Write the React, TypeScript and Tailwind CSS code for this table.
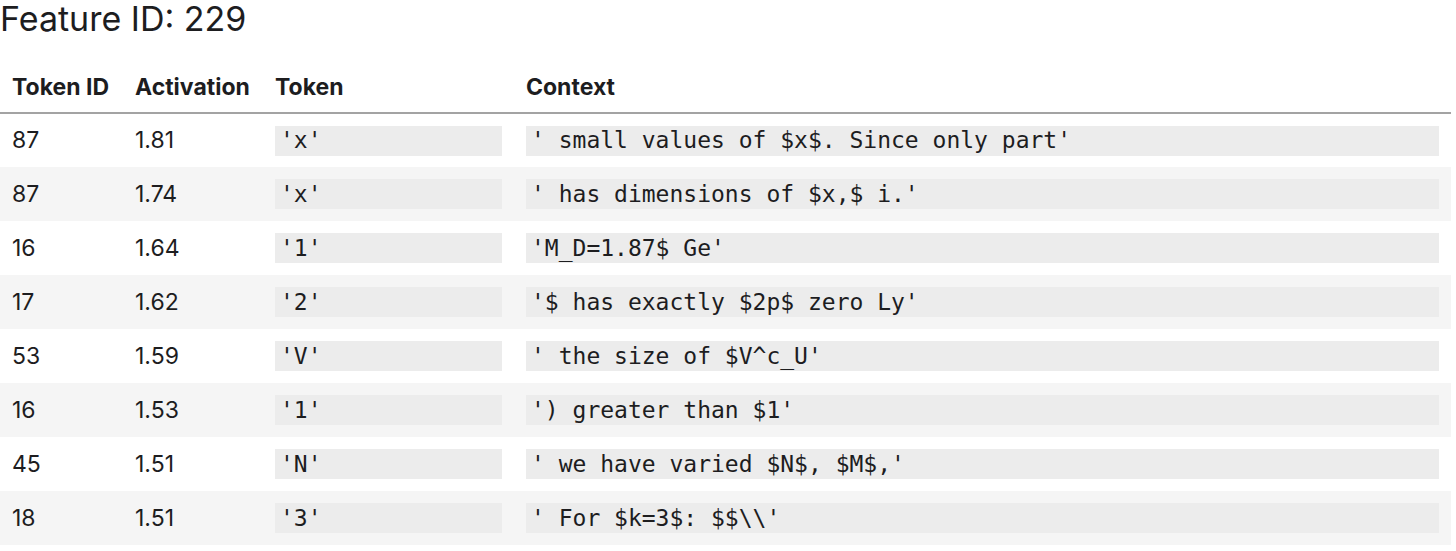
const rows = [
  { id: "87", act: "1.81", token: "'x'", context: "' small values of $x$. Since only part'" },
  { id: "87", act: "1.74", token: "'x'", context: "' has dimensions of $x,$ i.'" },
  { id: "16", act: "1.64", token: "'1'", context: "'M_D=1.87$ Ge'" },
  { id: "17", act: "1.62", token: "'2'", context: "'$ has exactly $2p$ zero Ly'" },
  { id: "53", act: "1.59", token: "'V'", context: "' the size of $V^c_U'" },
  { id: "16", act: "1.53", token: "'1'", context: "') greater than $1'" },
  { id: "45", act: "1.51", token: "'N'", context: "' we have varied $N$, $M$,'" },
  { id: "18", act: "1.51", token: "'3'", context: "' For $k=3$: $$\\\\'" },
];

export default function App() {
  return (
    <div className="bg-white w-[1456px] h-[551px] overflow-hidden text-[#1d1d1f] font-['Inter',sans-serif]">
      <h1 className="text-[34px] leading-[38px] font-normal">Feature ID: 229</h1>
      <table className="mt-[24px] w-[1451px] border-collapse table-fixed">
        <thead>
          <tr className="border-b-2 border-[#a3a3a3] h-[51px]">
            <th className="w-[123px] px-[12px] text-left text-[23px] font-bold">Token ID</th>
            <th className="w-[140px] px-[12px] text-left text-[23px] font-bold">Activation</th>
            <th className="w-[251px] px-[12px] text-left text-[23px] font-bold">Token</th>
            <th className="px-[12px] text-left text-[23px] font-bold">Context</th>
          </tr>
        </thead>
        <tbody>
          {rows.map((r, i) => (
            <tr key={i} className={i % 2 === 1 ? "bg-[#f5f5f5] h-[54px]" : "h-[54px]"}>
              <td className="px-[12px] text-[23px]">{r.id}</td>
              <td className="px-[12px] text-[23px]">{r.act}</td>
              <td className="px-[12px]">
                <div className="bg-[#ececec] h-[30px] px-[5px] flex items-center font-['DejaVu_Sans_Mono',monospace] text-[23px] whitespace-pre">
                  {r.token}
                </div>
              </td>
              <td className="px-[12px]">
                <div className="bg-[#ececec] h-[30px] px-[5px] flex items-center font-['DejaVu_Sans_Mono',monospace] text-[23px] whitespace-pre">
                  {r.context}
                </div>
              </td>
            </tr>
          ))}
        </tbody>
      </table>
    </div>
  );
}
